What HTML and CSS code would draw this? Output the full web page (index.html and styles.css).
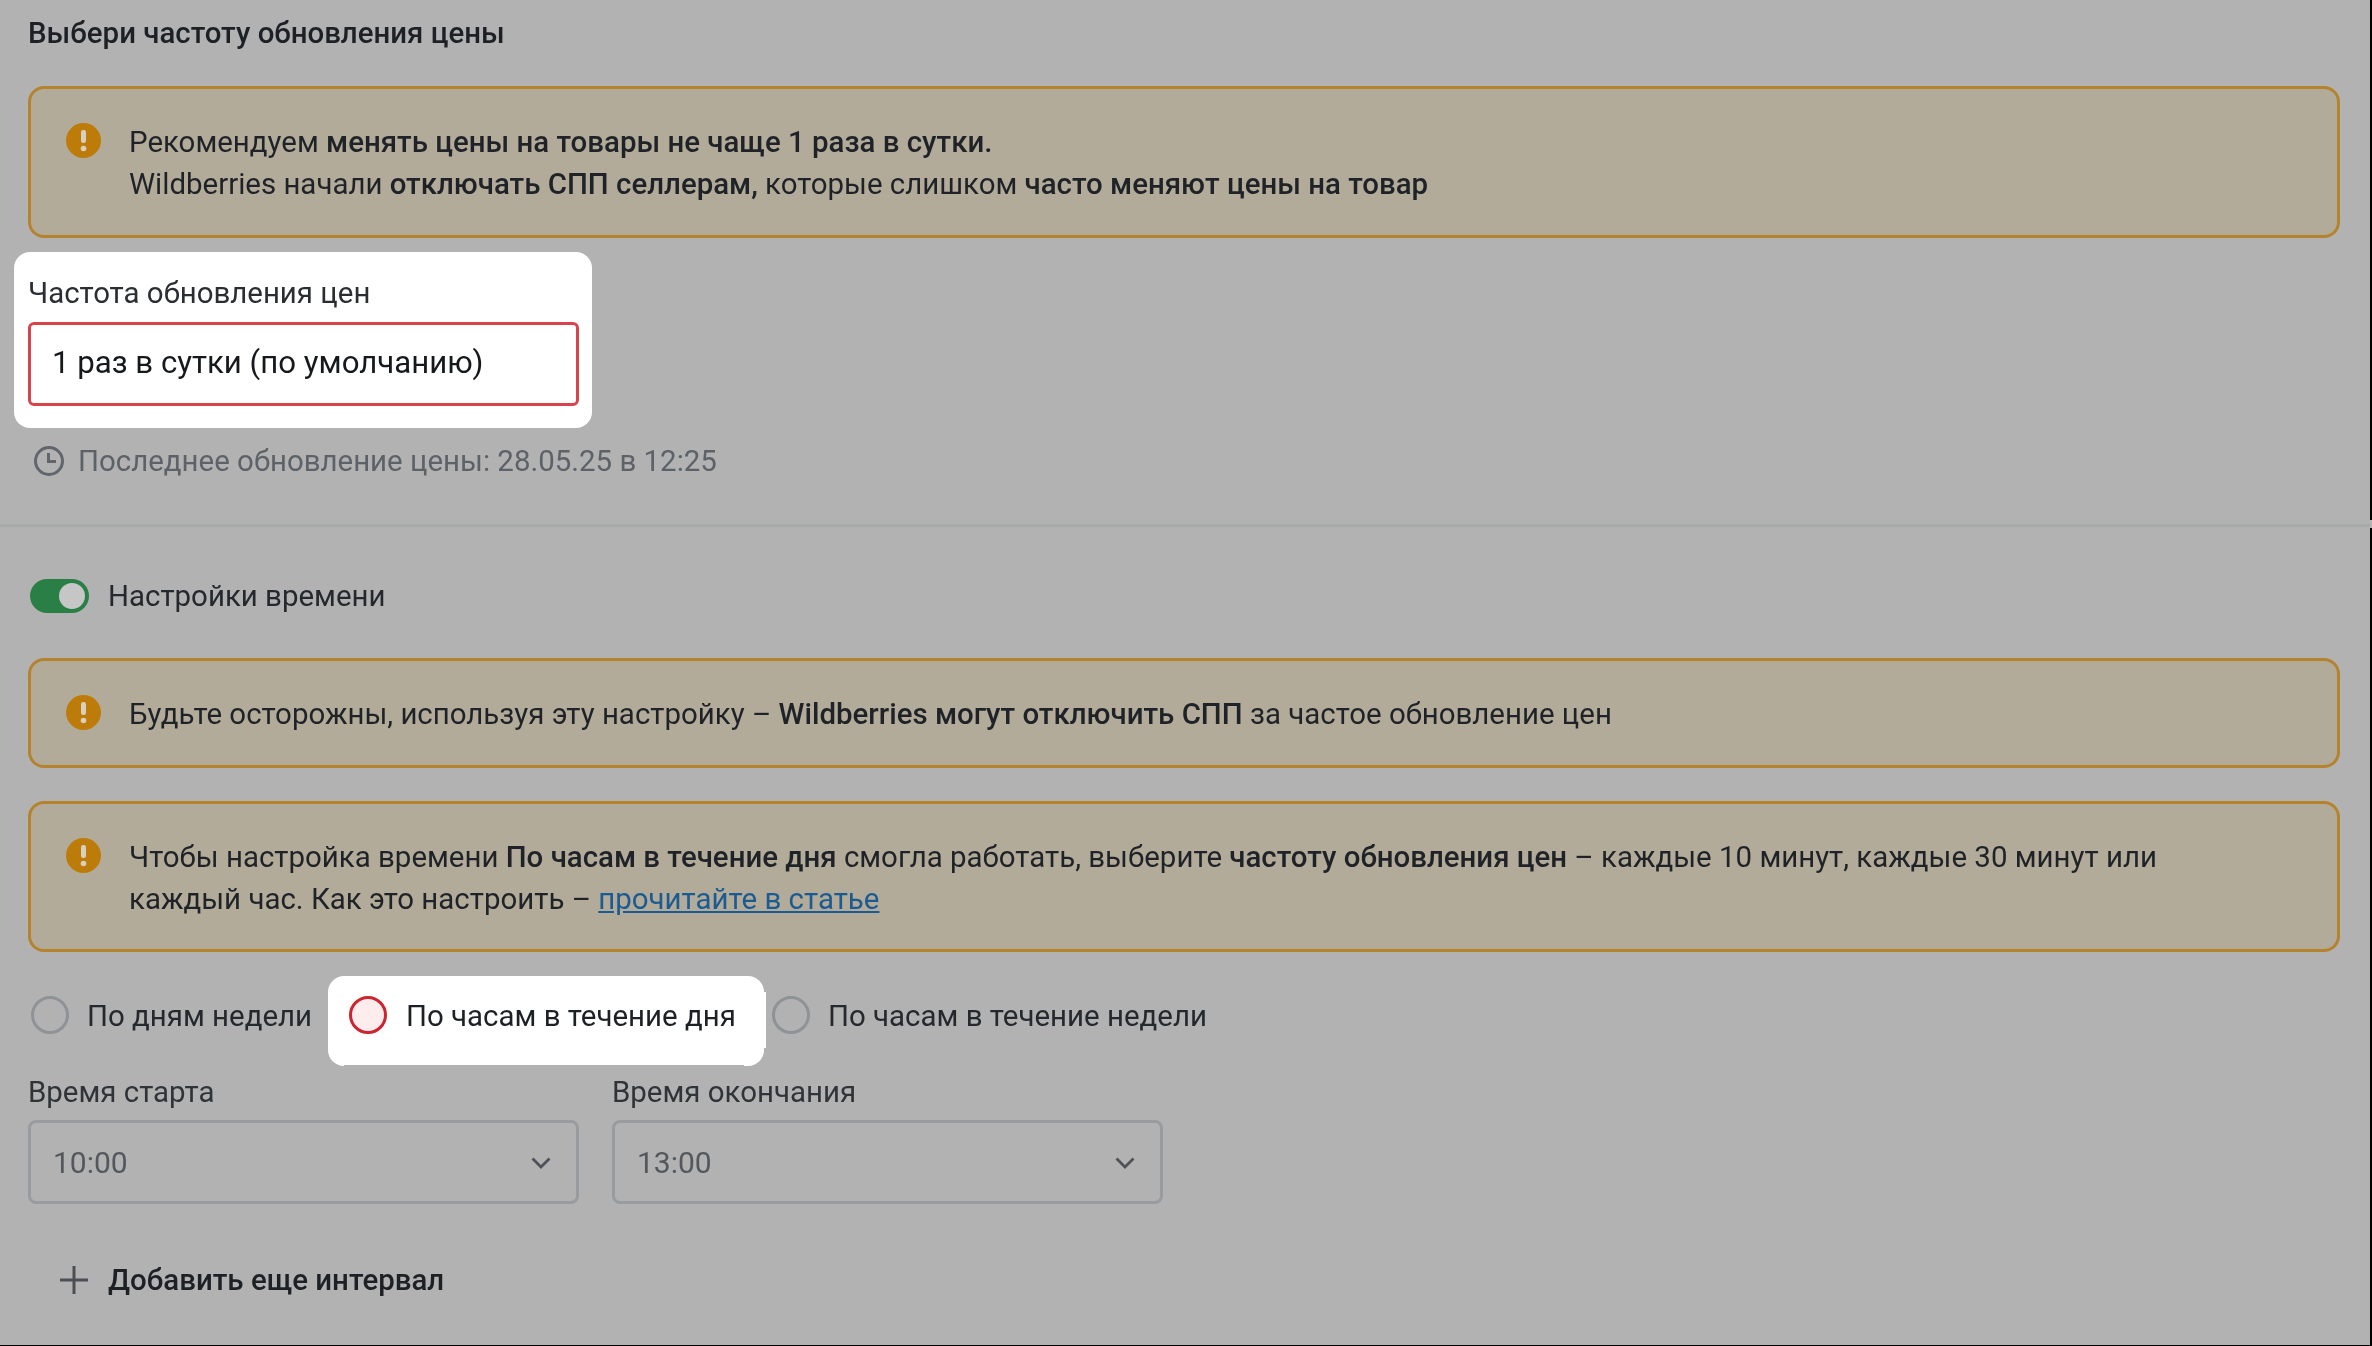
FILE: index.html
```html
<!DOCTYPE html>
<html lang="ru">
<head>
<meta charset="utf-8">
<title>Частота обновления цены</title>
<link rel="stylesheet" href="styles.css">
</head>
<body>
<main class="page">
  <section class="top">
    <h2 class="title">Выбери частоту обновления цены</h2>
    <div class="alert alert-a">
      <svg class="alert-icon" viewBox="0 0 35 35"><circle cx="17.5" cy="17.5" r="17.5"/><rect class="mark" x="15" y="7" width="5" height="13" rx="2.2"/><circle class="mark" cx="17.500" cy="25.500" r="2.800"/></svg>
      <p class="alert-text">Рекомендуем <b>менять цены на товары не чаще 1 раза в сутки.</b><br>Wildberries начали <b>отключать СПП селлерам,</b> которые слишком <b>часто меняют цены на товар</b></p>
    </div>
    <div class="spot">
      <label class="field-label">Частота обновления цен</label>
      <div class="input">1 раз в сутки (по умолчанию)</div>
    </div>
    <div class="updated">
      <svg class="clock" viewBox="0 0 30 30"><circle cx="15" cy="15" r="13.5"/><path d="M14.500 7V15.500H22"/></svg>
      <span>Последнее обновление цены: 28.05.25 в 12:25</span>
    </div>
  </section>
  <div class="divider"></div>
  <section class="bottom">
    <div class="toggle-row">
      <span class="toggle"></span>
      <span>Настройки времени</span>
    </div>
    <div class="alert alert-b">
      <svg class="alert-icon" viewBox="0 0 35 35"><circle cx="17.5" cy="17.5" r="17.5"/><rect class="mark" x="15" y="7" width="5" height="13" rx="2.2"/><circle class="mark" cx="17.500" cy="25.500" r="2.800"/></svg>
      <p class="alert-text">Будьте осторожны, используя эту настройку – <b>Wildberries могут отключить СПП</b> за частое обновление цен</p>
    </div>
    <div class="alert alert-c">
      <svg class="alert-icon" viewBox="0 0 35 35"><circle cx="17.5" cy="17.5" r="17.5"/><rect class="mark" x="15" y="7" width="5" height="13" rx="2.2"/><circle class="mark" cx="17.500" cy="25.500" r="2.800"/></svg>
      <p class="alert-text">Чтобы настройка времени <b>По часам в течение дня</b> смогла работать, выберите <b>частоту обновления цен</b> – каждые 10 минут, каждые 30 минут или<br>каждый час. Как это настроить – <a class="link" href="#">прочитайте в статье</a></p>
    </div>
    <div class="radios">
      <div class="radio radio-one"><span class="dot"></span><span>По дням недели</span></div>
      <div class="radio radio-two"><span class="dot dot-red"></span><span>По часам в течение дня</span></div>
      <div class="radio radio-three"><span class="dot"></span><span>По часам в течение недели</span></div>
    </div>
    <div class="selects">
      <div class="select-field">
        <label class="field-label">Время старта</label>
        <div class="select"><span>10:00</span><svg class="chevron" viewBox="0 0 20 12"><path d="M1.500 1.500L10 10L18.500 1.500"/></svg></div>
      </div>
      <div class="select-field">
        <label class="field-label">Время окончания</label>
        <div class="select"><span>13:00</span><svg class="chevron" viewBox="0 0 20 12"><path d="M1.500 1.500L10 10L18.500 1.500"/></svg></div>
      </div>
    </div>
    <div class="add">
      <svg class="plus" viewBox="0 0 28 28"><path d="M14 0V28M0 14H28"/></svg>
      <span>Добавить еще интервал</span>
    </div>
  </section>
</main>
</body>
</html>
```
FILE: styles.css
```css
html, body {
  margin: 0;
  padding: 0;
  background: #000;
}
body {
  width: 2372px;
  height: 1346px;
  overflow: hidden;
}
.page {
  width: 2370px;
  height: 1345px;
  background: #b2b2b2;
  color: #1f2327;
  font-family: Roboto, "Noto Sans", sans-serif;
  font-size: 29.45px;
  line-height: 42px;
  box-sizing: border-box;
  padding-top: 12px;
  filter: blur(0.5px);
}
.top, .bottom {
  padding-left: 28px;
  padding-right: 30px;
}
.title {
  margin: 0;
  font-size: 29.45px;
  font-weight: 500;
  line-height: 42px;
  color: #1d2024;
}
.alert {
  display: flex;
  gap: 28px;
  box-sizing: border-box;
  border: 3px solid #b5832e;
  border-radius: 16px;
  background: #b2ab9a;
  padding-left: 35px;
  align-items: flex-start;
}
.alert-a {
  margin-top: 32px;
  height: 152px;
  padding-top: 32px;
}
.alert-b {
  margin-top: 44px;
  height: 110px;
  padding-top: 32px;
}
.alert-c {
  margin-top: 33px;
  height: 151px;
  padding-top: 32px;
}
.alert-icon {
  width: 35px;
  height: 35px;
  flex: none;
  margin-top: 2px;
  fill: #bd7c0a;
}
.alert-icon .mark {
  fill: #d8cfbe;
}
.alert-text {
  margin: 0;
  font-weight: 400;
}
.alert-text b {
  font-weight: 500;
}
.link {
  color: #1c5a92;
  text-decoration: underline;
}
.spot {
  width: 578px;
  box-sizing: border-box;
  margin: 14px 0 0 -14px;
  height: 176px;
  background: #fff;
  border-radius: 16px;
  padding: 20px 14px 0;
}
.field-label {
  display: block;
  font-size: 29.45px;
  line-height: 42px;
  color: #2a2e33;
}
.input {
  margin-top: 8px;
  box-sizing: border-box;
  height: 84px;
  width: 551px;
  border: 3px solid #d8434e;
  border-radius: 6px;
  padding: 0 21px;
  font-size: 31.2px;
  line-height: 76px;
  color: #16191c;
}
.updated {
  display: flex;
  align-items: center;
  gap: 14px;
  margin: 14px 0 0 6px;
  height: 38px;
  color: #5d6268;
}
.clock {
  width: 30px;
  height: 30px;
  fill: none;
  stroke: #61666c;
  stroke-width: 3;
}
.divider {
  position: relative;
  margin-top: 44px;
  height: 3px;
  background: #a8aaa9;
}
.divider::after {
  content: "";
  position: absolute;
  left: 100%;
  top: -4px;
  width: 2px;
  height: 8px;
  background: #b2b2b2;
}
.toggle-row {
  display: flex;
  align-items: center;
  gap: 19px;
  margin-top: 51px;
  margin-left: 2px;
  height: 36px;
  color: #25292d;
}
.toggle {
  position: relative;
  width: 59px;
  height: 34px;
  border-radius: 17px;
  background: #2a7f46;
}
.toggle::after {
  content: "";
  position: absolute;
  right: 4px;
  top: 4px;
  width: 26px;
  height: 26px;
  border-radius: 50%;
  background: #c6c6c6;
}
.radios {
  display: flex;
  align-items: flex-start;
  margin-top: 24px;
  height: 90px;
}
.radio {
  display: flex;
  gap: 18px;
  align-items: center;
  height: 78px;
  box-sizing: border-box;
  color: #25292d;
}
.radio-one {
  padding-left: 3px;
  width: 300px;
}
.radio-two {
  position: relative;
  width: 436px;
  height: 90px;
  padding: 0 0 12px 21px;
  background: #fff;
  border-radius: 16px;
  color: #1d2125;
  gap: 19px;
}
.radio-two::before {
  content: "";
  position: absolute;
  left: 16px;
  right: 20px;
  bottom: 0;
  height: 1px;
  background: #b2b2b2;
}
.radio-two::after {
  content: "";
  position: absolute;
  left: 100%;
  top: 16px;
  width: 2px;
  height: 56px;
  background: #fff;
}
.radio-three {
  margin-left: 8px;
}
.radio span:last-child {
  padding-top: 2px;
}
.dot {
  width: 38px;
  height: 38px;
  box-sizing: border-box;
  border: 3px solid #8f9396;
  border-radius: 50%;
  flex: none;
}
.dot-red {
  border-color: #cc2530;
  background: #ffeced;
}
.selects {
  display: flex;
  gap: 33px;
  margin-top: 5px;
}
.select-field {
  width: 551px;
}
.select-field .field-label {
  color: #303438;
}
.select {
  margin-top: 7px;
  box-sizing: border-box;
  height: 84px;
  border: 3px solid #999c9f;
  border-radius: 8px;
  padding: 1px 25px 0 22px;
  display: flex;
  align-items: center;
  justify-content: space-between;
  font-size: 30px;
  color: #54585d;
}
.chevron {
  width: 20px;
  height: 12px;
  fill: none;
  stroke: #4e5359;
  stroke-width: 2.8;
}
.add {
  display: flex;
  align-items: center;
  gap: 20px;
  margin: 55px 0 0 32px;
  height: 42px;
  font-weight: 500;
  color: #1d2024;
}
.plus {
  width: 28px;
  height: 28px;
  fill: none;
  stroke: #4a4f55;
  stroke-width: 3;
}
```
